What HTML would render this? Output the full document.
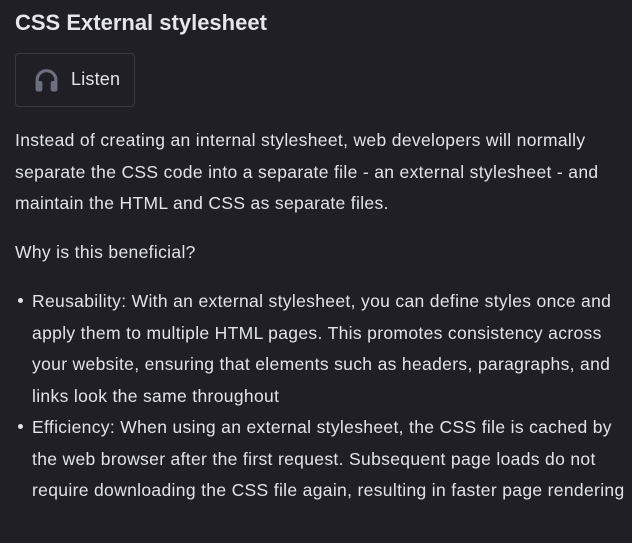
<!DOCTYPE html>
<html><head><meta charset="utf-8"><style>
html,body{margin:0;padding:0;background:#1f1f25;width:632px;height:543px;overflow:hidden}
body{font-family:"Liberation Sans",sans-serif;color:#e2e4e8;font-size:17.5px;letter-spacing:0.33px}
.t{position:absolute;left:15px;top:10px;font-size:22px;font-weight:bold;letter-spacing:0;color:#e6e7ea}
.btn{position:absolute;left:15px;top:53px;width:120px;height:54px;border:1px solid #373a44;border-radius:4px;box-sizing:border-box}
.btn svg{position:absolute;left:18px;top:13px}
.btn span{position:absolute;left:55px;top:15px;font-size:18px;letter-spacing:0.2px}
.l{position:absolute;white-space:nowrap;line-height:20px}
.d{position:absolute;left:18px;width:5px;height:5px;border-radius:50%;background:#e2e4e8}
</style></head><body>
<div class="t">CSS External stylesheet</div>
<div class="btn"><svg width="25" height="26" viewBox="0 0 24 24"><path d="M3 15v-3a9 9 0 0 1 18 0v3" fill="none" stroke="#6b7080" stroke-width="3"/><rect x="1.5" y="13" width="6.5" height="10" rx="2" fill="#6b7080"/><rect x="16" y="13" width="6.5" height="10" rx="2" fill="#6b7080"/></svg><span>Listen</span></div>
<div class="l" style="left:15px;top:130px">Instead of creating an internal stylesheet, web developers will normally</div>
<div class="l" style="left:15px;top:162px">separate the CSS code into a separate file - an external stylesheet - and</div>
<div class="l" style="left:15px;top:193px">maintain the HTML and CSS as separate files.</div>
<div class="l" style="left:15px;top:242px">Why is this beneficial?</div>
<div class="d" style="top:298px"></div>
<div class="l" style="left:32px;top:291px">Reusability: With an external stylesheet, you can define styles once and</div>
<div class="l" style="left:32px;top:323px">apply them to multiple HTML pages. This promotes consistency across</div>
<div class="l" style="left:32px;top:354px">your website, ensuring that elements such as headers, paragraphs, and</div>
<div class="l" style="left:32px;top:386px">links look the same throughout</div>
<div class="d" style="top:424px"></div>
<div class="l" style="left:32px;top:417px">Efficiency: When using an external stylesheet, the CSS file is cached by</div>
<div class="l" style="left:32px;top:449px">the web browser after the first request. Subsequent page loads do not</div>
<div class="l" style="left:32px;top:480px">require downloading the CSS file again, resulting in faster page rendering</div>
</body></html>
